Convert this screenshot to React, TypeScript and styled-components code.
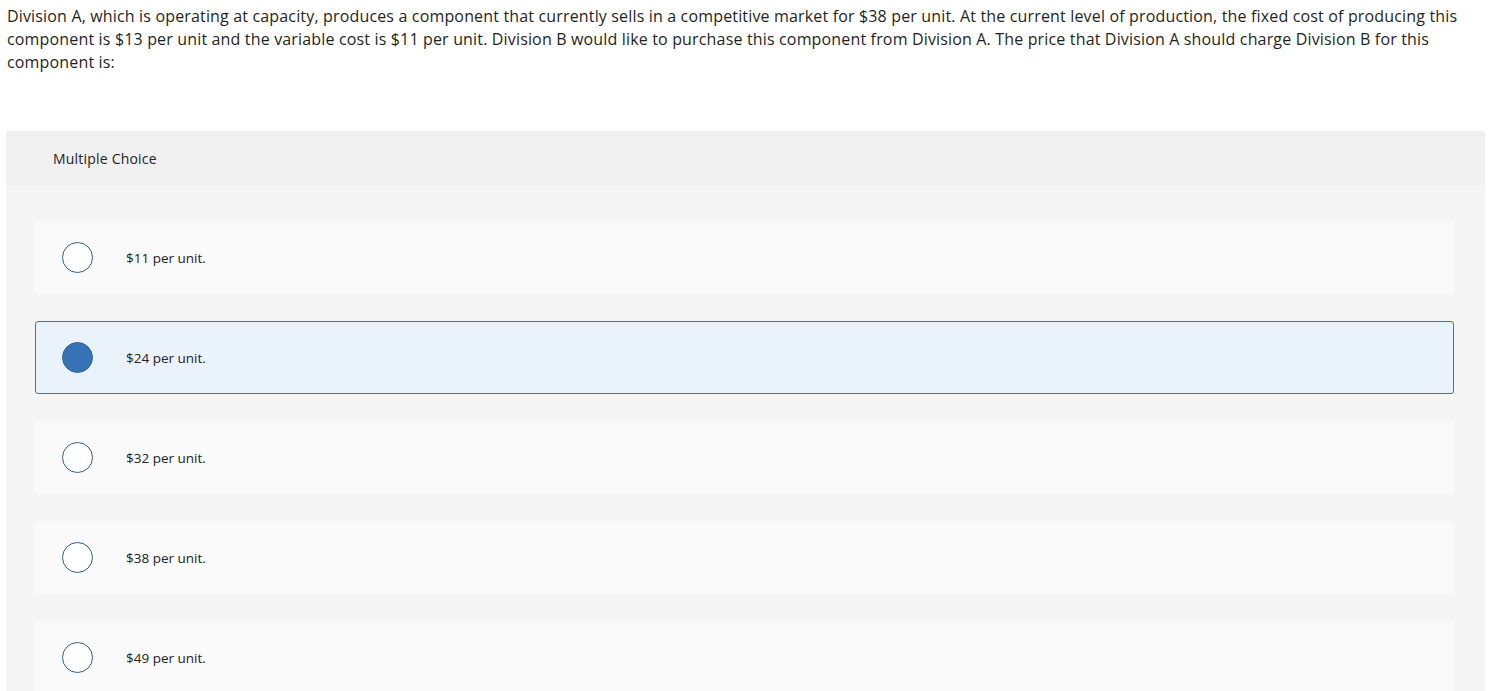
import React from "react";
import styled, { createGlobalStyle } from "styled-components";

const Global = createGlobalStyle`
  html, body { margin: 0; padding: 0; background: #ffffff; }
  body { font-family: "Open Sans", "Liberation Sans", sans-serif; color: #222; }
`;

const Page = styled.div`
  padding: 5px 10px 0 6px;
`;

const Question = styled.p`
  margin: 0 0 0 1px;
  font-size: 16px;
  letter-spacing: 0.16px;
  line-height: 23px;
  color: #1f1f1f;
`;

const Panel = styled.section`
  margin-top: 57px;
  background: #f5f5f5;
  border-radius: 4px 4px 0 0;
  overflow: hidden;
`;

const Header = styled.div`
  height: 54px;
  display: flex;
  align-items: center;
  padding-left: 47px;
  background: #f0f0f0;
  font-size: 14px;
  letter-spacing: 0.2px;
  color: #222;
`;

const List = styled.div`
  display: flex;
  flex-direction: column;
  gap: 27px;
  padding: 36px 31px 30px 29px;
`;

const Option = styled.label<{ $selected?: boolean }>`
  height: 73px;
  box-sizing: border-box;
  display: flex;
  align-items: center;
  padding-left: 26px;
  border-radius: 3px;
  background: ${(p) => (p.$selected ? "#eaf2fb" : "#fafafa")};
  border: 1px solid ${(p) => (p.$selected ? "#3f74b0" : "transparent")};
  cursor: pointer;
`;

const Radio = styled.span<{ $selected?: boolean }>`
  width: 31px;
  height: 31px;
  box-sizing: border-box;
  border-radius: 50%;
  border: 1.5px solid ${(p) => (p.$selected ? "#2f63a0" : "#2f5f92")};
  background: ${(p) => (p.$selected ? "#3672b5" : "#ffffff")};
  flex: none;
`;

const Label = styled.span`
  margin-left: 33px;
  font-size: 13.5px;
  color: #222;
`;

const options = ["$11 per unit.", "$24 per unit.", "$32 per unit.", "$38 per unit.", "$49 per unit."];

export default function App() {
  return (
    <Page>
      <Global />
      <Question>
        Division A, which is operating at capacity, produces a component that currently sells in a competitive market
        for $38 per unit. At the current level of production, the fixed cost of producing this component is $13 per
        unit and the variable cost is $11 per unit. Division B would like to purchase this component from Division A.
        The price that Division A should charge Division B for this component is:
      </Question>
      <Panel>
        <Header>Multiple Choice</Header>
        <List>
          {options.map((o, i) => (
            <Option key={o} $selected={i === 1}>
              <Radio $selected={i === 1} />
              <Label>{o}</Label>
            </Option>
          ))}
        </List>
      </Panel>
    </Page>
  );
}
